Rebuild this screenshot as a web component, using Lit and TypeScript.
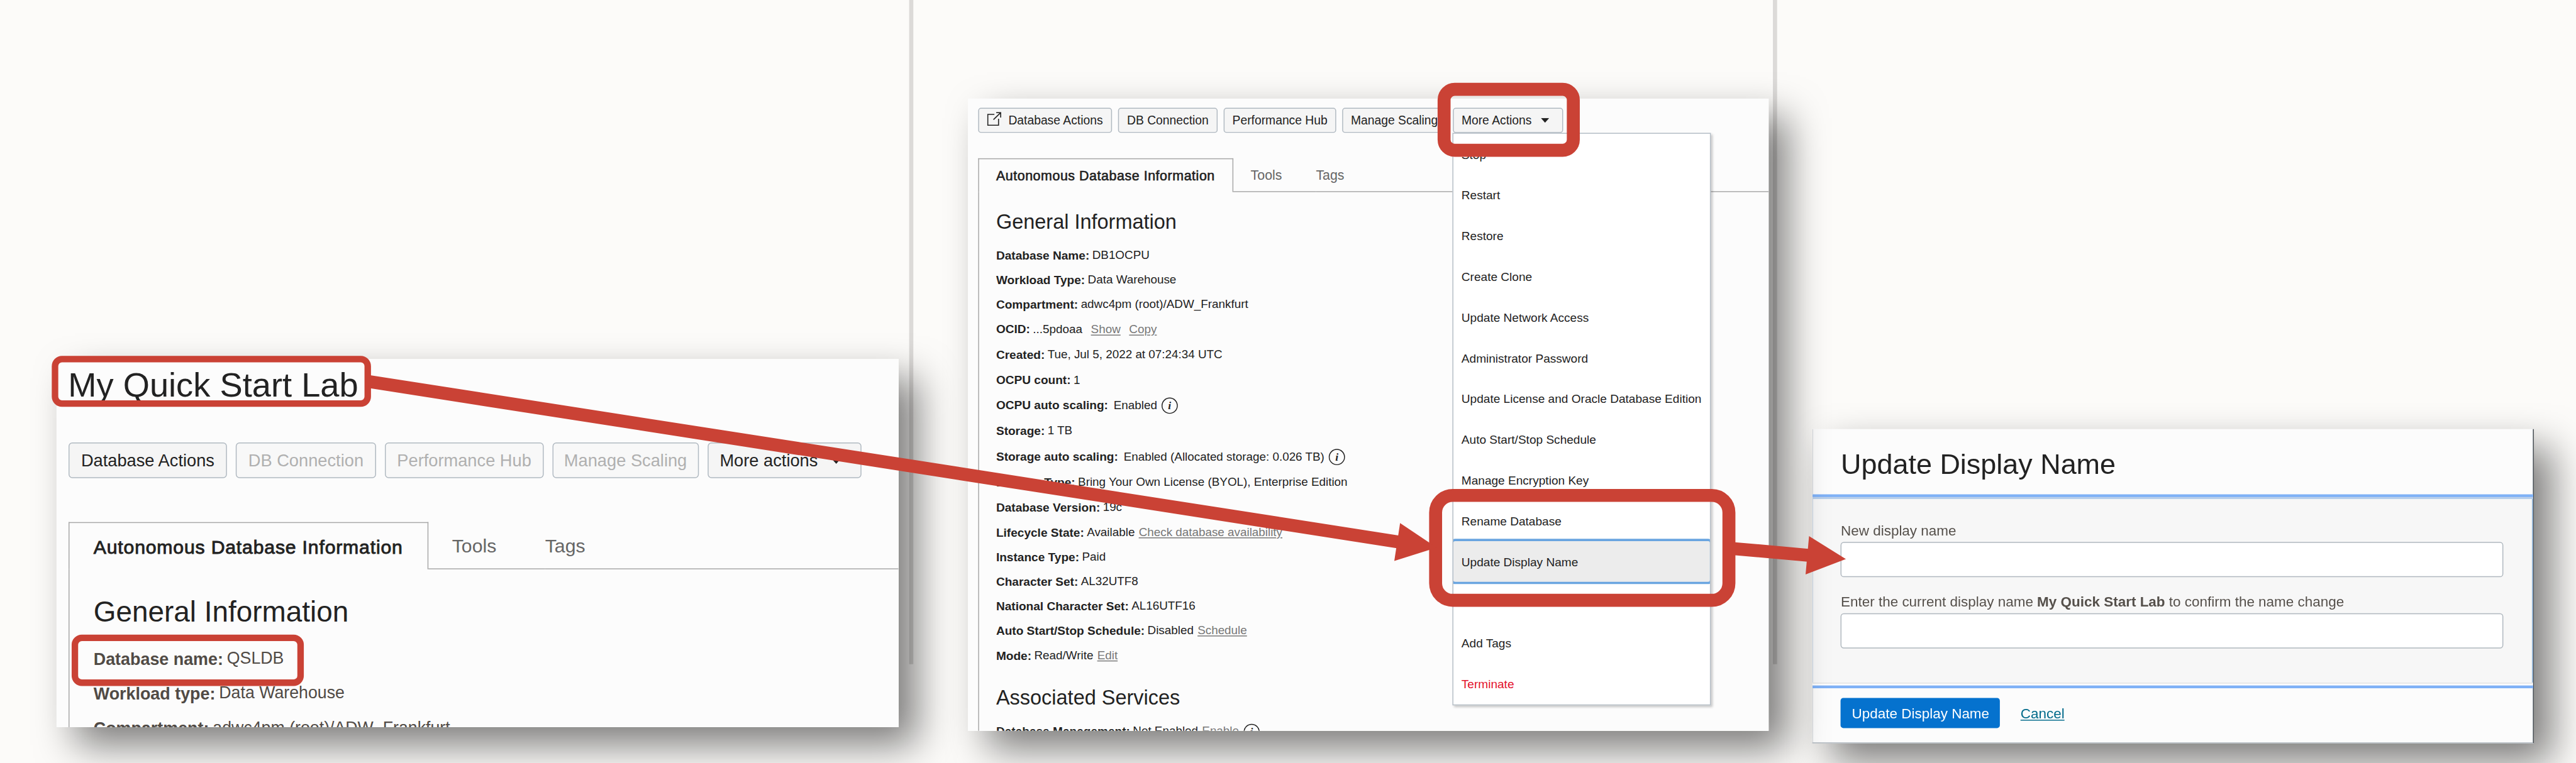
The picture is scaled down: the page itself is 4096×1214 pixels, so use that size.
import { LitElement, html, css, nothing } from "lit";
import { customElement } from "lit/decorators.js";
import { classMap } from "lit/directives/class-map.js";
import { styleMap } from "lit/directives/style-map.js";

interface ToolButton {
  label: string;
  width: number;
  disabled?: boolean;
  icon?: boolean;
  caret?: boolean;
}

interface InfoRow {
  label: string;
  value: string;
  links?: string[];
  linkGap?: "wide";
  tall?: boolean;
  flat?: boolean;
  spaced?: boolean;
  info?: boolean;
}

const LAB_BUTTONS: ToolButton[] = [
  { label: "Database Actions", width: 342 },
  { label: "DB Connection", width: 303, disabled: true },
  { label: "Performance Hub", width: 342.5, disabled: true },
  { label: "Manage Scaling", width: 316, disabled: true },
  { label: "More actions", width: 332, caret: true },
];

const LAB_ROWS: InfoRow[] = [
  { label: "Database name:", value: "QSLDB" },
  { label: "Workload type:", value: "Data Warehouse" },
  { label: "Compartment:", value: "adwc4pm (root)/ADW_Frankfurt" },
];

const DB_BUTTONS: ToolButton[] = [
  { label: "Database Actions", width: 288.3, icon: true },
  { label: "DB Connection", width: 215 },
  { label: "Performance Hub", width: 242.3 },
  { label: "Manage Scaling", width: 225.2 },
  { label: "More Actions", width: 238, caret: true },
];

const DB_ROWS: InfoRow[] = [
  { label: "Database Name:", value: "DB1OCPU" },
  { label: "Workload Type:", value: "Data Warehouse" },
  { label: "Compartment:", value: "adwc4pm (root)/ADW_Frankfurt" },
  { label: "OCID:", value: "...5pdoaa", links: ["Show", "Copy"], linkGap: "wide", tall: true, flat: true },
  { label: "Created:", value: "Tue, Jul 5, 2022 at 07:24:34 UTC" },
  { label: "OCPU count:", value: "1", tall: true, flat: true },
  { label: "OCPU auto scaling:", value: "Enabled", tall: true, flat: true, spaced: true, info: true },
  { label: "Storage:", value: "1 TB", tall: true },
  { label: "Storage auto scaling:", value: "Enabled (Allocated storage: 0.026 TB)", tall: true, flat: true, spaced: true, info: true },
  { label: "License Type:", value: "Bring Your Own License (BYOL), Enterprise Edition", tall: true },
  { label: "Database Version:", value: "19c" },
  { label: "Lifecycle State:", value: "Available", links: ["Check database availability"] },
  { label: "Instance Type:", value: "Paid" },
  { label: "Character Set:", value: "AL32UTF8" },
  { label: "National Character Set:", value: "AL16UTF16" },
  { label: "Auto Start/Stop Schedule:", value: "Disabled", links: ["Schedule"] },
  { label: "Mode:", value: "Read/Write", links: ["Edit"] },
];

const SERVICE_ROWS: InfoRow[] = [
  { label: "Database Management:", value: "Not Enabled", links: ["Enable"], info: true },
];

const MENU_ITEMS = [
  "Stop",
  "Restart",
  "Restore",
  "Create Clone",
  "Update Network Access",
  "Administrator Password",
  "Update License and Oracle Database Edition",
  "Auto Start/Stop Schedule",
  "Manage Encryption Key",
  "Rename Database",
  "Update Display Name",
  "Move Resource",
  "Add Tags",
  "Terminate",
];

@customElement("app-root")
export class AppRoot extends LitElement {
  static styles = css`
    :host {
      display: block;
      width: 4096px;
      height: 1214px;
      overflow: hidden;
      background: #fcfbf9;
      font-family: "Liberation Sans", Arial, sans-serif;
      color: #222;
    }
    * {
      box-sizing: border-box;
    }
    .stage {
      position: relative;
      width: 5562px;
      height: 1648px;
      transform: scale(0.73643);
      transform-origin: 0 0;
      white-space: nowrap;
    }
    .divider {
      position: absolute;
      top: 0;
      width: 9px;
      height: 1435px;
      background: #dcdad8;
    }
    .divider.first {
      left: 1963px;
    }
    .divider.second {
      left: 3828px;
    }
    .window {
      position: absolute;
      box-shadow: 40px 40px 80px rgba(0, 0, 0, 0.515);
    }
    .frame {
      display: flex;
      flex-direction: column;
      width: 100%;
      height: 100%;
      overflow: hidden;
      background: #fcfcfc;
    }

    /* toolbar */
    .toolbar {
      display: flex;
      flex: none;
      gap: var(--btn-gap);
      height: var(--btn-h);
      font-size: var(--btn-font);
    }
    .btn {
      display: flex;
      flex: none;
      align-items: center;
      justify-content: center;
      padding-top: 1px;
      border: 2.5px solid #b0b9c1;
      border-radius: var(--btn-radius);
      background: #f5f5f5;
    }
    .btn.disabled {
      color: #b0b0b0;
      background: #f8f8f8;
    }
    .btn.caret {
      justify-content: flex-start;
      padding-left: var(--caret-pad);
      gap: var(--caret-gap);
    }
    .btn.icon {
      justify-content: flex-start;
      padding-left: 17px;
      gap: 15px;
    }
    .triangle {
      width: var(--tri-w);
      height: var(--tri-h);
      fill: #222;
    }
    .external {
      width: 31px;
      height: 30px;
      margin-top: -6px;
      fill: none;
      stroke: #222;
      stroke-width: 2.2;
    }

    /* tabs */
    .tabs {
      display: flex;
      flex: none;
      height: var(--tab-h);
      color: #666;
      font-size: var(--tab-font);
    }
    .tab {
      flex: none;
      line-height: var(--tab-line);
      border-bottom: 2.5px solid #a7a7a7;
    }
    .tab.active {
      width: var(--tab-active-w);
      padding-left: var(--tab-pad);
      border: 2.5px solid #a7a7a7;
      border-bottom: none;
      color: #222;
      font-size: var(--tab-active-font);
      letter-spacing: 0.027em;
      -webkit-text-stroke: 0.03em #222;
      line-height: var(--tab-active-line);
    }
    .tab.second {
      width: var(--tab2-w);
      padding-left: var(--tab2-pad);
    }
    .tab.rest {
      flex: 1;
    }
    .body {
      flex: 1;
      padding-left: var(--tab-pad);
      border-left: 2.5px solid #a7a7a7;
    }
    .heading {
      padding-top: var(--head-pad);
      font-size: var(--head-font);
      line-height: var(--head-line);
    }
    .row {
      display: flex;
      height: var(--row-h);
      line-height: var(--row-line);
      font-size: var(--value-font);
    }
    .row.tall {
      height: 55.5px;
    }
    .label {
      margin-right: var(--label-gap);
      font-size: var(--label-font);
      font-weight: 700;
    }
    .row.spaced .label {
      margin-right: 12px;
    }
    .value,
    .link {
      position: relative;
      top: -2px;
    }
    .row.flat .value,
    .row.flat .link {
      top: 0;
    }
    .link {
      margin-left: 8.5px;
      color: #777;
      text-decoration: underline;
      text-decoration-thickness: 2px;
      text-underline-offset: 3px;
    }
    .row.wide .link {
      margin-left: 18.5px;
    }
    .info {
      display: flex;
      flex: none;
      align-items: center;
      justify-content: center;
      width: 35px;
      height: 35px;
      margin: 11px 0 0 9.5px;
      border: 2px solid #222;
      border-radius: 50%;
      font: italic 700 24px/31px "Liberation Serif", serif;
    }

    /* quick start lab window */
    .lab {
      left: 122px;
      top: 776px;
      width: 1818px;
      height: 795px;
      --btn-gap: 19px;
      --btn-h: 77px;
      --btn-font: 37px;
      --btn-radius: 8px;
      --caret-pad: 24.5px;
      --caret-gap: 26px;
      --tri-w: 27px;
      --tri-h: 15px;
      --tab-h: 102px;
      --tab-font: 41px;
      --tab-line: 105px;
      --tab-active-font: 41px;
      --tab-active-line: 104px;
      --tab-active-w: 777px;
      --tab-pad: 52px;
      --tab2-w: 252px;
      --tab2-pad: 51px;
      --head-pad: 28.3px;
      --head-font: 62.3px;
      --head-line: 128.4px;
      --row-h: 75px;
      --row-line: 76px;
      --label-font: 36.5px;
      --value-font: 36.3px;
      --label-gap: 8px;
    }
    .lab .frame {
      padding-left: 26px;
    }
    .lab .title {
      flex: none;
      height: 111px;
      margin: 0 0 68.5px -1px;
      font-size: 73.7px;
      line-height: 112px;
    }
    .lab .tabs {
      margin-top: 95px;
    }
    .lab .row {
      color: #504a45;
    }

    /* database details window */
    .details {
      left: 2090px;
      top: 213px;
      width: 1729px;
      height: 1366px;
      --btn-gap: 13.4px;
      --btn-h: 54.5px;
      --btn-font: 26.2px;
      --btn-radius: 6px;
      --caret-pad: 17px;
      --caret-gap: 19.5px;
      --tri-w: 18px;
      --tri-h: 10px;
      --tab-h: 73px;
      --tab-font: 29px;
      --tab-line: 73.5px;
      --tab-active-font: 29px;
      --tab-active-line: 73px;
      --tab-active-w: 551px;
      --tab-pad: 36.5px;
      --tab2-w: 178px;
      --tab2-pad: 37px;
      --head-pad: 19.4px;
      --head-font: 44.1px;
      --head-line: 90.8px;
      --row-h: 53.2px;
      --row-line: 55px;
      --label-font: 25.9px;
      --value-font: 25.6px;
      --label-gap: 6px;
    }
    .details .frame {
      padding: 19.5px 0 0 22.3px;
    }
    .details .tabs {
      margin-top: 54.5px;
    }
    .menu {
      position: absolute;
      left: 1045.5px;
      top: 73.5px;
      width: 558.5px;
      height: 1237.7px;
      overflow: hidden;
      border: 2.5px solid #b3bcc4;
      background: #fff;
      font-size: 25.9px;
    }
    .menu-shade {
      position: absolute;
      left: 1045.5px;
      top: 73.5px;
      width: 558.5px;
      height: 1237.7px;
      box-shadow: 3px 3px 5px rgba(0, 0, 0, 0.22);
    }
    .item {
      height: 88.05px;
      padding-left: 18px;
      line-height: 90px;
    }
    .item.selected {
      position: relative;
      z-index: 1;
      border-radius: 4px;
      background: #ececec;
      box-shadow: 0 0 0 5px #69a5e0;
    }
    .item.danger {
      color: #e3122c;
    }

    /* dialog window */
    .dialog {
      left: 3912.7px;
      top: 927px;
      width: 1558px;
      height: 678.6px;
    }
    .dialog .frame {
      border-right: 2.5px solid #45494d;
      border-bottom: 2px solid #a8b0b8;
    }
    .dialog-head {
      flex: none;
      height: 140.6px;
      padding-left: 61px;
      border-left: 1.5px solid #98a3ae;
      border-right: 1.5px solid #a8b2bb;
      font-size: 61px;
      line-height: 152px;
    }
    .rule {
      flex: none;
      height: 6.4px;
      margin-right: -2.5px;
      background: #7fb1f6;
    }
    .rule-shade {
      flex: none;
      height: 4.4px;
      border-bottom: 1.2px solid #9dc3ee;
      background: #bccfe8;
    }
    .dialog-body {
      flex: none;
      height: 396.5px;
      padding: 47px 60px 0 60.4px;
      border-left: 1.5px solid #7ea6cc;
      border-right: 2px solid #7ea6cc;
      background: #f7f7f7;
      color: #55504b;
      font-size: 30.5px;
      line-height: 40px;
    }
    .caption {
      height: 40px;
      padding-left: 0.5px;
      line-height: 42px;
    }
    .field {
      width: 1431.4px;
      height: 76px;
      margin: 5.6px 0 32.4px;
      border: 2.5px solid #b0b8bf;
      border-radius: 7px;
      background: #fff;
    }
    .hairline {
      flex: none;
      height: 5.8px;
      border-top: 2.4px solid #e2e2e2;
      background: #fff;
    }
    .dialog-foot {
      display: flex;
      flex: 1;
      align-items: flex-start;
      gap: 44.5px;
      padding: 21px 0 0 60.4px;
      border-left: 1.5px solid #98a3ae;
      border-right: 1.5px solid #a8b2bb;
      font-size: 30.5px;
      line-height: 66px;
    }
    .primary {
      width: 344px;
      height: 65px;
      padding-left: 1.5px;
      border-radius: 6px;
      background: #0572ce;
      color: #fff;
      text-align: center;
    }
    .cancel {
      color: #006a8a;
      text-decoration: underline;
      text-decoration-thickness: 2px;
      text-underline-offset: 3px;
    }

    .annotations {
      position: absolute;
      left: 0;
      top: 0;
      width: 5562px;
      height: 1648px;
    }
    .outline {
      fill: none;
      stroke: #ca4235;
    }
    .thin {
      stroke-width: 14;
    }
    .thick {
      stroke-width: 28;
    }
    .head {
      fill: #ca4235;
    }
  `;

  private toolbar(buttons: ToolButton[]) {
    return html`<div class="toolbar">
      ${buttons.map(
        (b) => html`<div
          class=${classMap({ btn: true, disabled: !!b.disabled, icon: !!b.icon, caret: !!b.caret })}
          style=${styleMap({ width: `${b.width}px` })}
        >
          ${b.icon
            ? html`<svg class="external" viewBox="0 0 31 30">
                <path d="M16 5.2H1.8V28.6H25V14.5M14 16.5L29 2M20 1.3H29.6V12" />
              </svg>`
            : nothing}
          <span>${b.label}</span>
          ${b.caret
            ? html`<svg class="triangle" viewBox="0 0 18 10" preserveAspectRatio="none">
                <path d="M0 0H18L9 10Z" />
              </svg>`
            : nothing}
        </div>`
      )}
    </div>`;
  }

  private tabs() {
    return html`<div class="tabs">
      <div class="tab active">Autonomous Database Information</div>
      <div class="tab second">Tools</div>
      <div class="tab rest">Tags</div>
    </div>`;
  }

  private row(r: InfoRow) {
    return html`<div
      class=${classMap({ row: true, tall: !!r.tall, flat: !!r.flat, spaced: !!r.spaced, wide: r.linkGap === "wide" })}
    >
      <span class="label">${r.label}</span>
      <span class="value">${r.value}</span>
      ${(r.links ?? []).map((l) => html`<span class="link">${l}</span>`)}
      ${r.info ? html`<span class="info">i</span>` : nothing}
    </div>`;
  }

  private lab() {
    return html`<section class="window lab">
      <div class="frame">
        <div class="title">My Quick Start Lab</div>
        ${this.toolbar(LAB_BUTTONS)} ${this.tabs()}
        <div class="body">
          <div class="heading">General Information</div>
          ${LAB_ROWS.map((r) => this.row(r))}
        </div>
      </div>
    </section>`;
  }

  private details() {
    return html`<section class="window details">
      <div class="frame">
        ${this.toolbar(DB_BUTTONS)} ${this.tabs()}
        <div class="body">
          <div class="heading">General Information</div>
          ${DB_ROWS.map((r) => this.row(r))}
          <div class="heading">Associated Services</div>
          ${SERVICE_ROWS.map((r) => this.row(r))}
        </div>
      </div>
      <div class="menu-shade"></div>
      <div class="menu">
        ${MENU_ITEMS.map(
          (m) => html`<div
            class=${classMap({ item: true, selected: m === "Update Display Name", danger: m === "Terminate" })}
          >${m}</div>`
        )}
      </div>
    </section>`;
  }

  private dialog() {
    return html`<section class="window dialog">
      <div class="frame">
        <div class="dialog-head">Update Display Name</div>
        <div class="rule"></div>
        <div class="rule-shade"></div>
        <div class="dialog-body">
          <div class="caption">New display name</div>
          <div class="field"></div>
          <div class="caption">Enter the current display name <b>My Quick Start Lab</b> to confirm the name change</div>
          <div class="field"></div>
        </div>
        <div class="hairline"></div>
        <div class="rule"></div>
        <div class="dialog-foot">
          <div class="primary">Update Display Name</div>
          <div class="cancel">Cancel</div>
        </div>
      </div>
    </section>`;
  }

  private annotations() {
    return html`<svg class="annotations" viewBox="0 0 5562 1648">
      <rect class="outline thin" x="118.8" y="776" width="675.2" height="96" rx="15" />
      <rect class="outline thin" x="161.7" y="1378" width="487.3" height="97" rx="15" />
      <rect class="outline thick" x="3118" y="193" width="279" height="131.7" rx="23" />
      <rect class="outline thick" x="3099.7" y="1070.3" width="633.3" height="226.7" rx="37" />
      <path class="outline thick" d="M797 824.5L3020 1171" />
      <path class="head" d="M3023 1130L3102 1183L3010.5 1212Z" />
      <path class="outline thick" d="M3740 1185L3904 1199.6" />
      <path class="head" d="M3906 1158.4L3985.5 1208L3898.5 1241Z" />
    </svg>`;
  }

  render() {
    return html`<div class="stage">
      <div class="divider first"></div>
      <div class="divider second"></div>
      ${this.lab()} ${this.dialog()} ${this.details()} ${this.annotations()}
    </div>`;
  }
}
